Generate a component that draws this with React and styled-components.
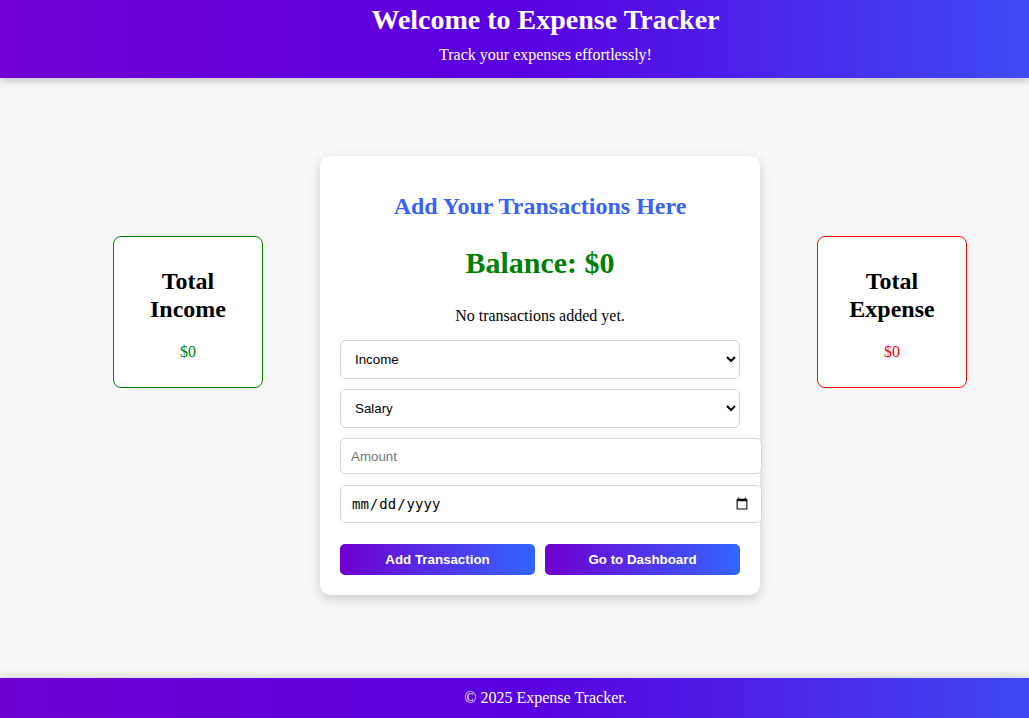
import React from "react";
import styled, { createGlobalStyle } from "styled-components";

const GlobalStyle = createGlobalStyle`
  * { box-sizing: border-box; }
  html, body { margin: 0; padding: 0; }
  body {
    background: #f8f8f8;
    font-family: "Liberation Serif", "Times New Roman", serif;
    color: #000;
  }
`;

const Page = styled.div`
  min-height: 100vh;
  display: flex;
  flex-direction: column;
`;

const Header = styled.header`
  background: linear-gradient(90deg, #7200d4 0%, #5a00e2 50%, #3d4bf6 100%);
  color: #fff;
  text-align: center;
  padding: 4px 0 14px 62px;
  box-shadow: 0 3px 8px rgba(0, 0, 0, 0.22);
  position: relative;
  z-index: 1;
`;

const HeaderTitle = styled.h1`
  margin: 0 0 10px;
  font-size: 28px;
  line-height: 32px;
  font-weight: bold;
`;

const HeaderSub = styled.p`
  margin: 0;
  font-size: 16px;
  line-height: 18px;
`;

const Main = styled.main`
  flex: 1;
  display: flex;
  justify-content: center;
  align-items: flex-start;
  gap: 57px;
  padding: 78px 0 0 51px;
`;

const SideCard = styled.div`
  width: 150px;
  margin-top: 80px;
  padding: 10px;
  background: #fff;
  border: 1px solid ${(p) => p.$color};
  border-radius: 8px;
  text-align: center;
`;

const SideTitle = styled.h2`
  margin: 20px 0;
  font-size: 24px;
  line-height: 28px;
  font-weight: bold;
`;

const SideValue = styled.p`
  margin: 0 0 16px;
  font-size: 16px;
  line-height: 18px;
  color: ${(p) => p.$color};
`;

const Card = styled.section`
  width: 440px;
  background: #fff;
  border-radius: 10px;
  padding: 20px;
  box-shadow: 0 4px 12px rgba(0, 0, 0, 0.18);
  text-align: center;
`;

const CardTitle = styled.h2`
  margin: 16px 0 26px;
  font-size: 24px;
  line-height: 28px;
  color: #3a62f5;
  font-weight: bold;
`;

const Balance = styled.h1`
  margin: 0 0 27px;
  font-size: 30px;
  line-height: 34px;
  color: #008000;
  font-weight: bold;
`;

const Empty = styled.p`
  margin: 0 0 15px;
  font-size: 16px;
  line-height: 18px;
`;

const Form = styled.div`
  display: flex;
  flex-direction: column;
  align-items: flex-start;
  text-align: left;
`;

const Select = styled.select`
  width: 400px;
  height: 39px;
  margin-bottom: 10px;
  padding: 0 10px;
  border: 1px solid #d6d6d6;
  border-radius: 5px;
  background: #fff;
  color: #000;
  font-family: "Liberation Sans", Arial, sans-serif;
  font-size: 13.33px;
`;

const Input = styled.input`
  width: 422px;
  height: ${(p) => p.$h}px;
  margin-bottom: ${(p) => p.$mb}px;
  padding: 0 10px;
  border: 1px solid #d6d6d6;
  border-radius: 5px;
  background: #fff;
  color: #000;
  font-family: ${(p) =>
    p.$mono ? `"DejaVu Sans Mono", "Liberation Mono", monospace` : `"Liberation Sans", Arial, sans-serif`};
  font-size: ${(p) => (p.$mono ? "14px" : "13.33px")};
  &::placeholder { color: #757575; }
`;

const ButtonRow = styled.div`
  display: flex;
  gap: 10px;
  width: 400px;
`;

const Button = styled.button`
  flex: 1;
  height: 31px;
  border: none;
  border-radius: 5px;
  background: linear-gradient(90deg, #7000d0 0%, #3366ff 100%);
  color: #fff;
  font-family: "Liberation Sans", Arial, sans-serif;
  font-weight: bold;
  font-size: 13.33px;
  cursor: pointer;
`;

const Footer = styled.footer`
  background: linear-gradient(90deg, #6e00d2 0%, #5a00e0 50%, #3f47f2 100%);
  color: #fff;
  text-align: center;
  padding: 11px 0 11px 62px;
  font-size: 16px;
  line-height: 18px;
  box-shadow: 0 -3px 8px rgba(0, 0, 0, 0.12);
`;

export default function App() {
  return (
    <Page>
      <GlobalStyle />
      <Header>
        <HeaderTitle>Welcome to Expense Tracker</HeaderTitle>
        <HeaderSub>Track your expenses effortlessly!</HeaderSub>
      </Header>
      <Main>
        <SideCard $color="#008000">
          <SideTitle>Total Income</SideTitle>
          <SideValue $color="#008000">$0</SideValue>
        </SideCard>
        <Card>
          <CardTitle>Add Your Transactions Here</CardTitle>
          <Balance>Balance: $0</Balance>
          <Empty>No transactions added yet.</Empty>
          <Form>
            <Select defaultValue="Income">
              <option>Income</option>
              <option>Expense</option>
            </Select>
            <Select defaultValue="Salary">
              <option>Salary</option>
              <option>Freelance</option>
              <option>Other</option>
            </Select>
            <Input type="number" placeholder="Amount" $h={36} $mb={11} />
            <Input type="date" $h={38} $mb={21} $mono />
            <ButtonRow>
              <Button>Add Transaction</Button>
              <Button>Go to Dashboard</Button>
            </ButtonRow>
          </Form>
        </Card>
        <SideCard $color="#ff0000">
          <SideTitle>Total Expense</SideTitle>
          <SideValue $color="#ff0000">$0</SideValue>
        </SideCard>
      </Main>
      <Footer>© 2025 Expense Tracker.</Footer>
    </Page>
  );
}
